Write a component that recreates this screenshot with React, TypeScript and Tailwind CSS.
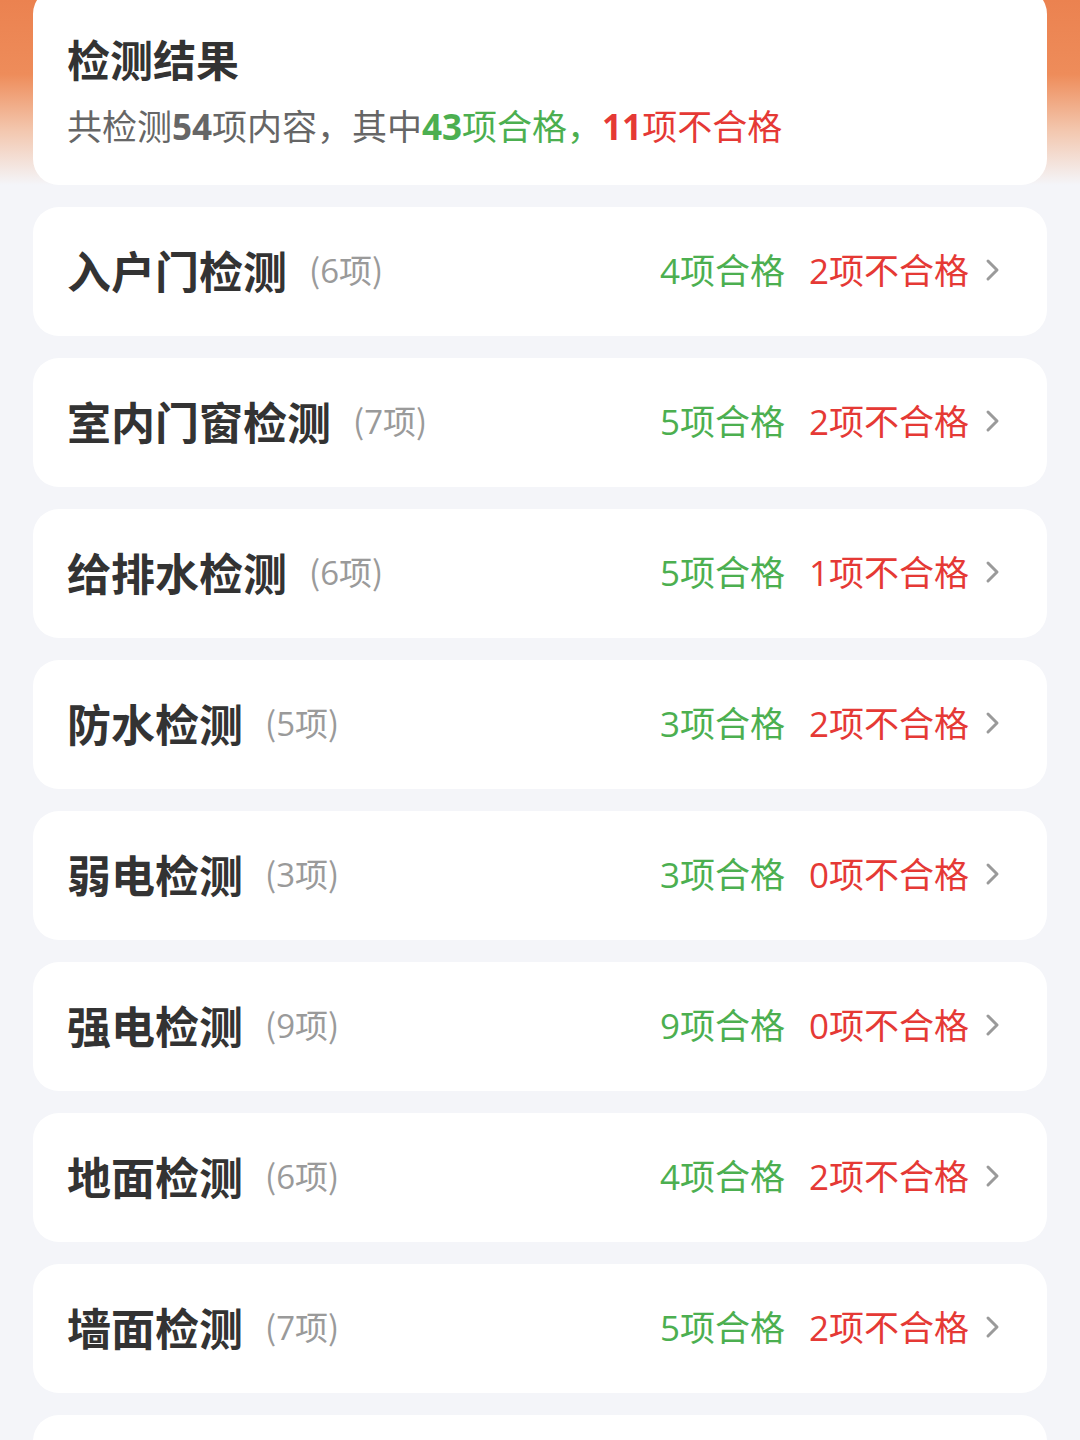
import React from "react";

const rows = [
  { name: "入户门检测", total: 6, ok: 4, bad: 2 },
  { name: "室内门窗检测", total: 7, ok: 5, bad: 2 },
  { name: "给排水检测", total: 6, ok: 5, bad: 1 },
  { name: "防水检测", total: 5, ok: 3, bad: 2 },
  { name: "弱电检测", total: 3, ok: 3, bad: 0 },
  { name: "强电检测", total: 9, ok: 9, bad: 0 },
  { name: "地面检测", total: 6, ok: 4, bad: 2 },
  { name: "墙面检测", total: 7, ok: 5, bad: 2 },
];

const font = { fontFamily: '"Noto Sans CJK SC", "Noto Sans", sans-serif' };
const num = { fontFamily: '"Open Sans", "Noto Sans CJK SC", sans-serif' };

function Chevron() {
  return (
    <svg width="16" height="24" viewBox="0 0 16 24" className="ml-[16px]">
      <path d="M3 3 L12 12 L3 21" fill="none" stroke="#9a9a9a" strokeWidth="3" strokeLinecap="round" strokeLinejoin="round" />
    </svg>
  );
}

export default function App() {
  return (
    <div className="relative w-[1080px] h-[1440px] overflow-hidden bg-[#f4f5f9]" style={font}>
      <div className="absolute left-0 top-0 w-full h-[185px] bg-[linear-gradient(to_bottom,#eb8250_0%,#ee8c5a_40%,#f3c6ad_70%,#f4f5f9_100%)]" />
      <div className="relative flex flex-col gap-[22px] px-[33px] -mt-[12px]">
        <div className="bg-white rounded-[26px] pt-[42px] pb-[35px] pl-[34px]">
          <div className="text-[43px] leading-[56px] font-bold text-[#333333]">检测结果</div>
          <div className="mt-[16px] text-[35px] leading-[46px] text-[#666666]">
            共检测<span className="font-bold" style={num}>54</span>项内容，其中
            <span className="text-[#4caf50]"><span className="font-bold" style={num}>43</span>项合格，</span>
            <span className="text-[#e53935]"><span className="font-bold" style={num}>11</span>项不合格</span>
          </div>
        </div>
        {rows.map((r) => (
          <div key={r.name} className="bg-white rounded-[26px] h-[129px] flex items-center pl-[34px] pr-[46px] pb-[4px]">
            <div className="text-[44px] font-bold text-[#333333] leading-none">{r.name}</div>
            <div className="ml-[22px] text-[33px] text-[#9a9a9a] leading-none">
              (<span style={num}>{r.total}</span>项)
            </div>
            <div className="ml-auto flex items-center">
              <span className="text-[35px] text-[#4caf50] leading-none">
                <span style={num}>{r.ok}</span>项合格
              </span>
              <span className="ml-[24px] text-[35px] text-[#e53935] leading-none">
                <span style={num}>{r.bad}</span>项不合格
              </span>
              <Chevron />
            </div>
          </div>
        ))}
        <div className="bg-white rounded-[26px] h-[129px]" />
      </div>
    </div>
  );
}
